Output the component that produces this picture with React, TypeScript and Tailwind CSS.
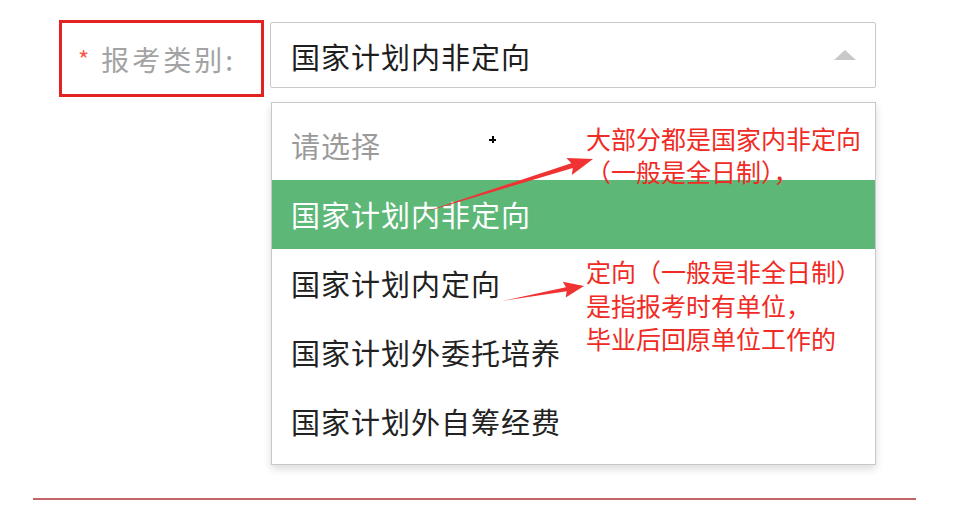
const FONT = { fontFamily: '"Noto Sans CJK SC", "Noto Sans", sans-serif' };

const OPTIONS = ['请选择', '国家计划内非定向', '国家计划内定向', '国家计划外委托培养', '国家计划外自筹经费'];

function Arrows() {
  // 标注箭头（截图上手画的红色箭头）
  return (
    <svg className="pointer-events-none absolute left-0 top-0" width="954" height="526">
      <polygon
        fill="#f03232"
        points="418,214 572.8,168 571.8,175.1 593,159 566.4,157.9 571.3,163.2"
      />
      <polygon
        fill="#f03232"
        points="502,301 566.7,291.2 565.7,297.5 584,286 562.9,281.7 565.9,287.2"
      />
    </svg>
  );
}

export default function App() {
  const selected = 1;

  return (
    <div className="relative h-[526px] w-[954px] overflow-hidden bg-white" style={FONT}>
      <div className="flex items-start gap-[6px] pl-[59px] pt-[20px]">
        <div className="flex h-[77px] w-[205px] items-center border-[3px] border-[#e32222] pl-[16px]">
          <span className="mr-[12px] text-[24px] leading-none text-[#f25b4b]">*</span>
          <span className="text-[28px] tracking-[3px] text-[#a3a3a3]">报考类别:</span>
        </div>

        <div className="relative mt-[2px]">
          <div className="flex h-[66px] w-[606px] items-center justify-between rounded-[2px] border border-[#c9c9c9] bg-white pl-[20px] pr-[19px]">
            <span className="pt-[4px] text-[29px] tracking-[1px] text-[#1e1e1e]">{OPTIONS[selected]}</span>
            <span className="h-0 w-0 border-x-[11px] border-b-[10px] border-x-transparent border-b-[#c8c8c8]" />
          </div>

          <ul className="absolute left-[1px] top-[80px] w-[605px] border border-[#c8c8c8] bg-white py-[8px] shadow-[0_4px_8px_rgba(0,0,0,0.14)]">
            {OPTIONS.map((o, i) => (
              <li
                key={o}
                className={`flex h-[69px] items-center pl-[19px] text-[29px] tracking-[1px] ${
                  i === selected ? 'bg-[#5db878] text-white' : i === 0 ? 'text-[#9a9a9a]' : 'text-[#222]'
                }`}
              >
                {o}
              </li>
            ))}
          </ul>
        </div>
      </div>

      <div className="ml-[33px] mt-[401px] h-[2px] w-[883px] bg-[#c46464]" />

      <Arrows />

      {/* 鼠标光标 */}
      <div className="absolute left-[489px] top-[136px] h-[7px] w-[7px]">
        <div className="absolute left-0 top-[3px] h-[2px] w-[7px] bg-black" />
        <div className="absolute left-[3px] top-0 h-[7px] w-[2px] bg-black" />
      </div>

      <div className="absolute left-[586px] top-[122px] text-[25px] leading-[33px] text-[#f02a24]">
        <p>大部分都是国家内非定向</p>
        <p>（一般是全日制），</p>
      </div>

      <div className="absolute left-[586px] top-[255px] text-[25px] leading-[33.5px] text-[#f02a24]">
        <p>定向（一般是非全日制）</p>
        <p>是指报考时有单位，</p>
        <p>毕业后回原单位工作的</p>
      </div>
    </div>
  );
}
